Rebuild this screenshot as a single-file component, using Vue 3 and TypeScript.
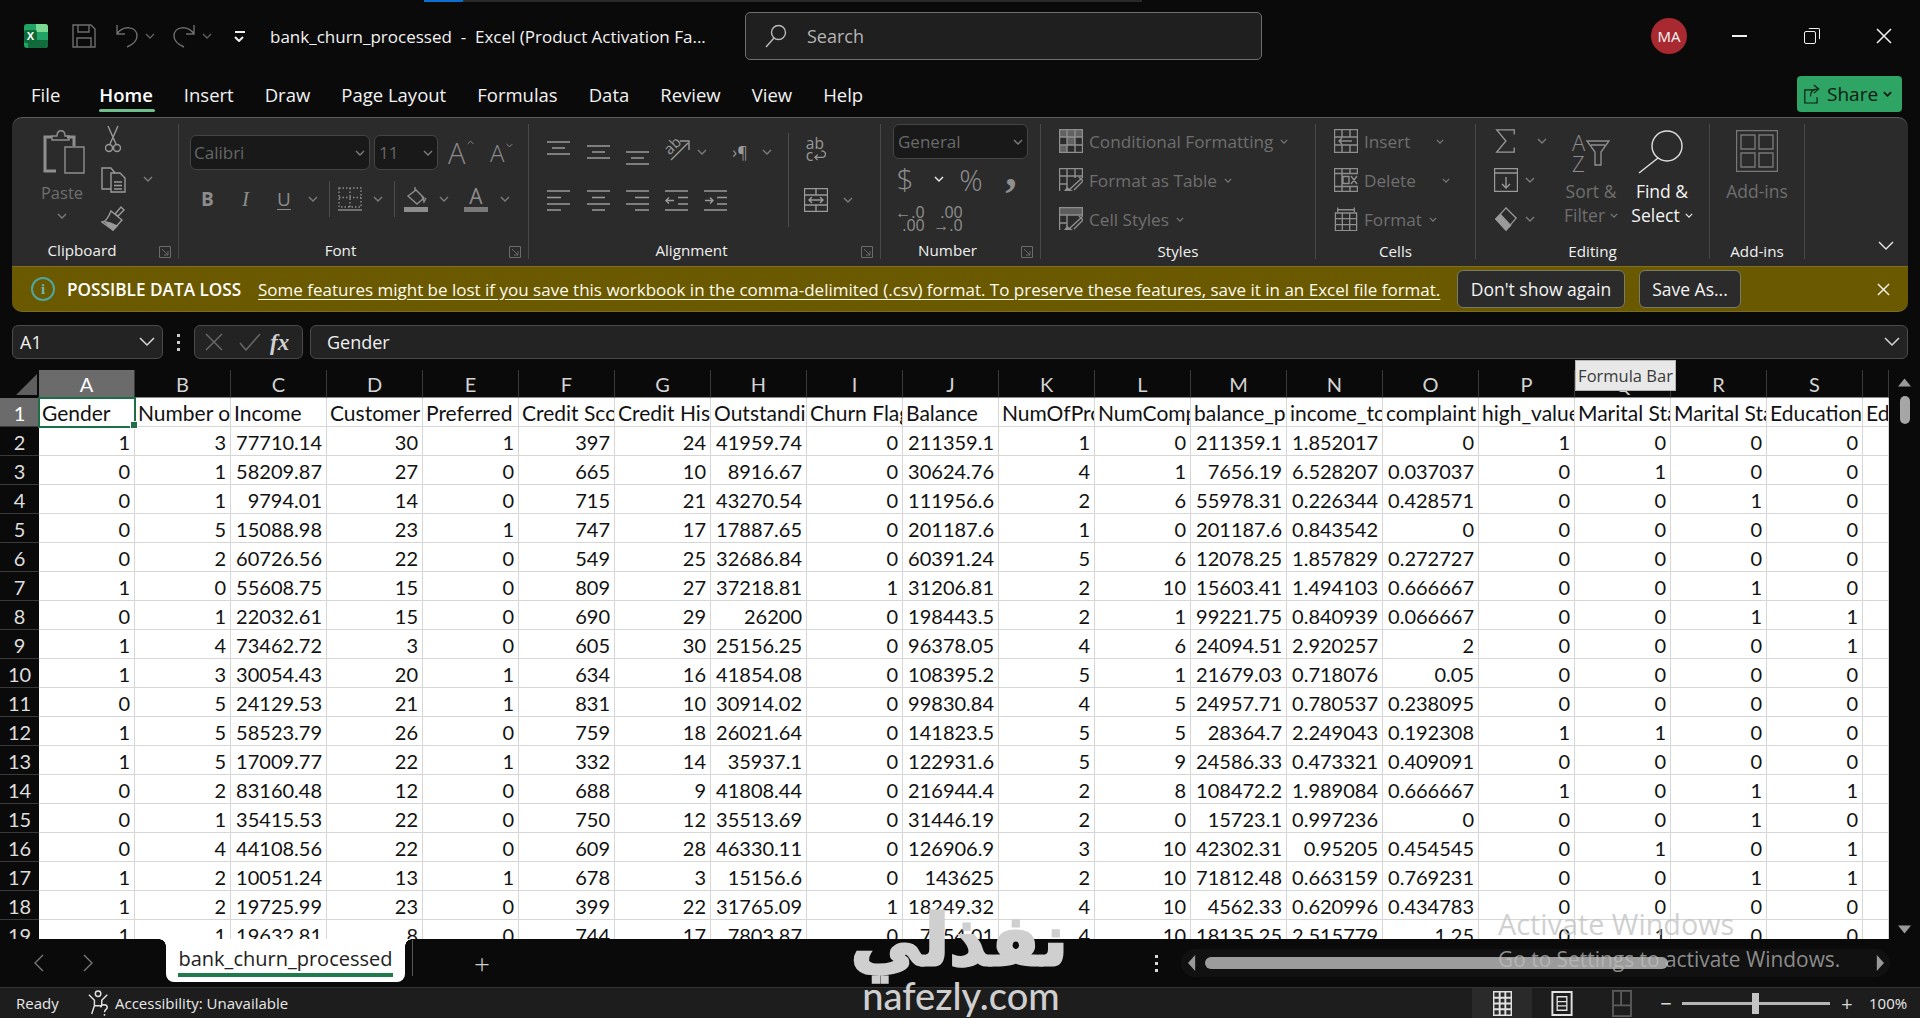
<script setup lang="ts">
const columns = "ABCDEFGHIJKLMNOPQRS".split("");

const headers = [
  "Gender", "Number of", "Income", "Customer", "Preferred", "Credit Score", "Credit History",
  "Outstanding", "Churn Flag", "Balance", "NumOfProducts", "NumComplaints", "balance_per",
  "income_to", "complaint", "high_value", "Marital Status", "Marital Status", "Education", "Education",
];

const rows: string[] = [
  "1,3,77710.14,30,1,397,24,41959.74,0,211359.1,1,0,211359.1,1.852017,0,1,0,0,0",
  "0,1,58209.87,27,0,665,10,8916.67,0,30624.76,4,1,7656.19,6.528207,0.037037,0,1,0,0",
  "0,1,9794.01,14,0,715,21,43270.54,0,111956.6,2,6,55978.31,0.226344,0.428571,0,0,1,0",
  "0,5,15088.98,23,1,747,17,17887.65,0,201187.6,1,0,201187.6,0.843542,0,0,0,0,0",
  "0,2,60726.56,22,0,549,25,32686.84,0,60391.24,5,6,12078.25,1.857829,0.272727,0,0,0,0",
  "1,0,55608.75,15,0,809,27,37218.81,1,31206.81,2,10,15603.41,1.494103,0.666667,0,0,1,0",
  "0,1,22032.61,15,0,690,29,26200,0,198443.5,2,1,99221.75,0.840939,0.066667,0,0,1,1",
  "1,4,73462.72,3,0,605,30,25156.25,0,96378.05,4,6,24094.51,2.920257,2,0,0,0,1",
  "1,3,30054.43,20,1,634,16,41854.08,0,108395.2,5,1,21679.03,0.718076,0.05,0,0,0,0",
  "0,5,24129.53,21,1,831,10,30914.02,0,99830.84,4,5,24957.71,0.780537,0.238095,0,0,0,0",
  "1,5,58523.79,26,0,759,18,26021.64,0,141823.5,5,5,28364.7,2.249043,0.192308,1,1,0,0",
  "1,5,17009.77,22,1,332,14,35937.1,0,122931.6,5,9,24586.33,0.473321,0.409091,0,0,0,0",
  "0,2,83160.48,12,0,688,9,41808.44,0,216944.4,2,8,108472.2,1.989084,0.666667,1,0,1,1",
  "0,1,35415.53,22,0,750,12,35513.69,0,31446.19,2,0,15723.1,0.997236,0,0,0,1,0",
  "0,4,44108.56,22,0,609,28,46330.11,0,126906.9,3,10,42302.31,0.95205,0.454545,0,1,0,1",
  "1,2,10051.24,13,1,678,3,15156.6,0,143625,2,10,71812.48,0.663159,0.769231,0,0,1,1",
  "1,2,19725.99,23,0,399,22,31765.09,1,18249.32,4,10,4562.33,0.620996,0.434783,0,0,0,0",
  "1,1,19632.81,8,0,744,17,7803.87,0,7254.01,4,10,18135.25,2.515779,1.25,0,1,0,0",
];

const table = rows.map((r) => r.split(","));
const tabs = ["Insert", "Draw", "Page Layout", "Formulas", "Data", "Review", "View", "Help"];
</script>

<template>
  <div class="app">
    <svg class="defs" aria-hidden="true">
      <symbol id="chev" viewBox="0 0 10 6"><path d="M1 1l4 4 4-4" /></symbol>
      <symbol id="launch" viewBox="0 0 12 12"><path d="M.5.5h11v11H.5zM3 3l6 6M9 5v4H5" /></symbol>
      <symbol id="save" viewBox="0 0 24 24"><path d="M1 1h18l4 4v18H1zM6 1v7h11V1M5 23v-9h14v9" /></symbol>
      <symbol id="undo" viewBox="0 0 24 24"><path d="M2 1v9h8M2 10C8 1 22 2 22 12c0 5-3 8-10 11" /></symbol>
      <symbol id="redo" viewBox="0 0 24 24"><path d="M22 1v9h-8M22 10C16 1 2 2 2 12c0 5 3 8 10 11" /></symbol>
      <symbol id="search" viewBox="0 0 22 24"><circle cx="13.5" cy="8.500" r="7" /><path d="M9 14L1 23" /></symbol>
      <symbol id="paste" viewBox="0 0 42 46">
        <path d="M9 8H2v34h11" stroke-width="3" />
        <path d="M24 8h7v9" stroke-width="3" />
        <path d="M9 11V7h5c0-7 8-7 8 0h4v4z" />
        <path d="M22 18h19v26H22z" />
      </symbol>
      <symbol id="cut" viewBox="0 0 16 28"><path d="M3 1l8 18M13 1L5 19" /><circle cx="4" cy="23" r="3.500" /><circle cx="12" cy="23" r="3.500" /></symbol>
      <symbol id="copy" viewBox="0 0 25 26"><path d="M10 22H1V1h9l4 5" /><path d="M10 6h9l5 5v14H10zM13 15h8M13 18.500h8M13 22h8" /></symbol>
      <symbol id="brush" viewBox="0 0 24 26"><path d="M14 9l6-7 3 3-6 6zM10 6l11 9-9 10-11-8c4 0 7-6 9-11z" /><path d="M4 17l8 8 4-4-7-3z" fill="currentColor" /></symbol>
      <symbol id="border" viewBox="0 0 24 24">
        <path d="M1 1h22v19H1zM12 1v19M1 10.500h22" stroke-dasharray="1.500 2" />
        <path d="M0 23h24" />
      </symbol>
      <symbol id="bucket" viewBox="0 0 24 26">
        <path d="M4 10l8-6 8 8-7 6zM11 4V1" />
        <path d="M18 10l2 6 2-4" />
        <path d="M0 21h24v5H0z" fill="currentColor" stroke="none" />
      </symbol>
      <symbol id="al1" viewBox="0 0 23 14"><path d="M0 1h23M5 7h13M0 13h23" /></symbol>
      <symbol id="al-l" viewBox="0 0 23 21"><path d="M0 1h23M0 7.500h14M0 14h23M0 20h14" /></symbol>
      <symbol id="al-c" viewBox="0 0 23 21"><path d="M0 1h23M5 7.500h13M0 14h23M5 20h13" /></symbol>
      <symbol id="al-r" viewBox="0 0 23 21"><path d="M0 1h23M9 7.500h14M0 14h23M9 20h14" /></symbol>
      <symbol id="ind-l" viewBox="0 0 23 21"><path d="M0 1h23M0 20h23M13 7.500h10M13 14h10M9 10.500H1M4 7.500l-3 3 3 3" /></symbol>
      <symbol id="ind-r" viewBox="0 0 23 21"><path d="M0 1h23M0 20h23M13 7.500h10M13 14h10M1 10.500h8M6 7.500l3 3-3 3" /></symbol>
      <symbol id="arrow-ne" viewBox="0 0 26 22"><path d="M7 21L24 4M16 2h9v9" /></symbol>
      <symbol id="wrap-arrow" viewBox="0 0 14 12"><path d="M9 1c6 0 6 7 0 7H2M5 5L2 8l3 3" /></symbol>
      <symbol id="merge" viewBox="0 0 24 24"><path d="M.5.5h23v23H.5zM.5 7h23M.5 17h23M12 .5V7M12 17v6.500M5 12h14M8 9l-3 3 3 3M16 9l3 3-3 3" /></symbol>
      <symbol id="cond" viewBox="0 0 24 24">
        <path d="M.5.5h23v23H.5zM.5 8h23M.5 16h23M8 .5v23M16 .5v23" />
        <path d="M.5.5h23V8H.5zM8 8h8v8H8zM.5 16H8v7.500H.5z" fill="currentColor" fill-opacity=".55" stroke="none" />
      </symbol>
      <symbol id="table" viewBox="0 0 24 24">
        <path d="M.5 23V.5h23V10M.5 8h23M.5 16h8M8 .5V23M16 .5V10" />
        <path d="M23 10L11 21M20 9l4 4-9 9" />
        <path d="M8 19l6 4H5z" fill="currentColor" stroke="none" />
      </symbol>
      <symbol id="cellst" viewBox="0 0 24 24">
        <path d="M.5 23V.5h23V10M.5 8h23M.5 16h8M8 8v15" />
        <path d="M.5.5h23V8H.5z" fill="currentColor" fill-opacity=".5" stroke="none" />
        <path d="M23 10L11 21M20 9l4 4-9 9" />
        <path d="M8 19l6 4H5z" fill="currentColor" stroke="none" />
      </symbol>
      <symbol id="c-ins" viewBox="0 0 24 24"><path d="M.5.5h23v23H.5zM.5 8h23M.5 16h23M8 .5V8M16 .5V8M8 16v7.500M16 16v7.500M18 12H5M8 9l-3 3 3 3" /></symbol>
      <symbol id="c-del" viewBox="0 0 24 24"><path d="M.5.5h23v5H.5zM.5 18.500h23v5H.5zM.5 5.500v13M8 .5v23M16 .5v5M16 18.500v5M9 8.500h6v7H9zM17 8l6 8M23 8l-6 8" /></symbol>
      <symbol id="c-fmt" viewBox="0 0 24 26"><path d="M.5 6.500h23v19H.5zM.5 12.500h23M.5 19h23M8 6.500v19M16 6.500v19M3 3h18M3 .5v5M21 .5v5" /></symbol>
      <symbol id="sigma" viewBox="0 0 22 26"><path d="M21 6V1H2l10 12L2 25h19v-5" /></symbol>
      <symbol id="fill" viewBox="0 0 24 24"><path d="M.5.5h23v23H.5zM.5 5h23M12 9v11M8 16l4 4 4-4" /></symbol>
      <symbol id="eraser" viewBox="0 0 24 26"><path d="M12 1l11 11-11 13L1 13z" /><path d="M1 13l5-5 11 12-5 5z" fill="currentColor" /></symbol>
      <symbol id="funnel" viewBox="0 0 24 26"><path d="M1 1h22l-8 11v13H9V12zM5 5h14" /></symbol>
      <symbol id="glass" viewBox="0 0 45 44"><circle cx="29" cy="16" r="15" /><path d="M20 28L1 43" /></symbol>
      <symbol id="addins" viewBox="0 0 42 42"><path d="M.5.5h41v41H.5zM5 5h14v14H5zM23 5h14v14H23zM5 23h14v14H5zM23 23h14v14H23z" /></symbol>
      <symbol id="tri-l" viewBox="0 0 10 20"><path d="M9 0v20L0 10z" fill="currentColor" stroke="none" /></symbol>
      <symbol id="tri-r" viewBox="0 0 10 20"><path d="M1 0v20l9-10z" fill="currentColor" stroke="none" /></symbol>
      <symbol id="share" viewBox="0 0 22 24"><path d="M13 7H1v16h15v-7M8 15c0-6 3-9 8-9M12 1l6 5-6 5" /></symbol>
      <symbol id="person" viewBox="0 0 24 28"><circle cx="11" cy="4" r="3" /><path d="M1 5l6 6v6l-3 9M21 5l-6 6v6M7 17h8M14 19c0-4 7-4 7 0 0 2-3 2-3 5M18 26v2" /></symbol>
      <symbol id="v-normal" viewBox="0 0 20 26"><path d="M.5.5h19v25H.5zM.5 7h19M.5 13h19M.5 19h19M7 .5v25M13 .5v25" stroke-width="2" /></symbol>
      <symbol id="v-page" viewBox="0 0 22 26"><path d="M1 1h20v24H1z" stroke-width="2" /><path d="M6 6h10v14H6zM6 11h10M6 15.500h10" /></symbol>
      <symbol id="v-break" viewBox="0 0 22 30"><path d="M1 1h20v28H1zM1 17h20M10 1v16" stroke-width="2" /></symbol>
    </svg>

    <div class="loadbar"><i class="load-blue" /><i class="load-gray" /></div>

    <header class="titlebar">
      <div class="logo">
        <i class="logo-a" /><i class="logo-b" /><i class="logo-c" />
        <span class="logo-x">X</span>
      </div>
      <svg class="ic save"><use href="#save" /></svg>
      <svg class="ic undo"><use href="#undo" /></svg>
      <svg class="chev tb-chev"><use href="#chev" /></svg>
      <svg class="ic redo"><use href="#redo" /></svg>
      <svg class="chev tb-chev"><use href="#chev" /></svg>
      <span class="qat"><i class="qat-line" /><svg class="chev qat-chev"><use href="#chev" /></svg></span>
      <div class="doc-title">bank_churn_processed&nbsp; -&nbsp; Excel (Product Activation Fa...</div>
      <div class="searchbox">
        <svg class="ic search-ic"><use href="#search" /></svg>
        <span>Search</span>
      </div>
      <div class="avatar">MA</div>
      <i class="win-min" />
      <div class="win-restore"><i /><i /></div>
      <svg class="win-close" viewBox="0 0 16 16"><path d="M1 1l14 14M15 1L1 15" /></svg>
    </header>

    <nav class="tabbar">
      <span class="tab file">File</span>
      <span class="tab active">Home</span>
      <span v-for="t in tabs" :key="t" class="tab">{{ t }}</span>
      <button class="share" type="button">
        <svg class="ic share-ic"><use href="#share" /></svg>
        <span>Share</span>
        <svg class="chev share-chev"><use href="#chev" /></svg>
      </button>
    </nav>

    <section class="ribbon">
      <!-- Clipboard -->
      <div class="group g-clip">
        <div class="body">
          <div class="paste-col">
            <svg class="ic paste-ic"><use href="#paste" /></svg>
            <span class="off paste-txt">Paste</span>
            <svg class="chev"><use href="#chev" /></svg>
          </div>
          <div class="clip-small">
            <svg class="ic cut-ic"><use href="#cut" /></svg>
            <svg class="ic copy-ic"><use href="#copy" /></svg>
            <svg class="ic brush-ic"><use href="#brush" /></svg>
          </div>
          <svg class="chev copy-chev"><use href="#chev" /></svg>
        </div>
        <div class="glabel"><span>Clipboard</span><svg class="launch"><use href="#launch" /></svg></div>
      </div>

      <!-- Font -->
      <div class="group g-font">
        <div class="body col">
          <div class="font-row1">
            <div class="combo font-name"><span>Calibri</span><svg class="chev"><use href="#chev" /></svg></div>
            <div class="combo font-size"><span>11</span><svg class="chev"><use href="#chev" /></svg></div>
            <span class="grow-a big">A<svg class="chev up-chev"><use href="#chev" /></svg></span>
            <span class="grow-a small">A<svg class="chev dn-chev"><use href="#chev" /></svg></span>
          </div>
          <div class="font-row2">
            <span class="fmt b">B</span>
            <span class="fmt i">I</span>
            <span class="fmt u">U</span>
            <svg class="chev"><use href="#chev" /></svg>
            <i class="vsep" />
            <svg class="ic border-ic"><use href="#border" /></svg>
            <svg class="chev"><use href="#chev" /></svg>
            <i class="vsep" />
            <svg class="ic bucket-ic"><use href="#bucket" /></svg>
            <svg class="chev"><use href="#chev" /></svg>
            <span class="font-color">A<i /></span>
            <svg class="chev"><use href="#chev" /></svg>
          </div>
        </div>
        <div class="glabel"><span>Font</span><svg class="launch"><use href="#launch" /></svg></div>
      </div>

      <!-- Alignment -->
      <div class="group g-align">
        <div class="body">
          <div class="align-left">
            <div class="align-row1">
              <svg class="ic al al-top"><use href="#al1" /></svg>
              <svg class="ic al al-mid"><use href="#al1" /></svg>
              <svg class="ic al al-bot"><use href="#al1" /></svg>
              <span class="orient"><span class="orient-txt">ab</span><svg class="ic orient-ic"><use href="#arrow-ne" /></svg></span>
              <svg class="chev"><use href="#chev" /></svg>
              <i />
              <span class="rtl">›¶</span>
              <svg class="chev"><use href="#chev" /></svg>
            </div>
            <div class="align-row2">
              <svg class="ic al2"><use href="#al-l" /></svg>
              <svg class="ic al2"><use href="#al-c" /></svg>
              <svg class="ic al2"><use href="#al-r" /></svg>
              <svg class="ic al2"><use href="#ind-l" /></svg>
              <svg class="ic al2"><use href="#ind-r" /></svg>
            </div>
          </div>
          <i class="align-sep" />
          <div class="align-right">
            <span class="wrap"><span>ab</span><span class="wrap-l2">c<svg class="ic wrap-ic"><use href="#wrap-arrow" /></svg></span></span>
            <i />
            <svg class="ic merge-ic"><use href="#merge" /></svg>
            <svg class="chev"><use href="#chev" /></svg>
          </div>
        </div>
        <div class="glabel"><span>Alignment</span><svg class="launch"><use href="#launch" /></svg></div>
      </div>

      <!-- Number -->
      <div class="group g-num">
        <div class="body col">
          <div class="combo num-combo"><span>General</span><svg class="chev"><use href="#chev" /></svg></div>
          <div class="num-row2">
            <span class="glyph dollar">$</span>
            <svg class="chev bright"><use href="#chev" /></svg>
            <span class="glyph pct">%</span>
            <span class="glyph comma">,</span>
          </div>
          <div class="num-row3">
            <span class="dec"><span>←.0</span><span>.00</span></span>
            <span class="dec"><span>.00</span><span>→.0</span></span>
          </div>
        </div>
        <div class="glabel"><span>Number</span><svg class="launch"><use href="#launch" /></svg></div>
      </div>

      <!-- Styles -->
      <div class="group g-styles">
        <div class="body col list">
          <div class="item"><svg class="ic item-ic"><use href="#cond" /></svg><span>Conditional Formatting</span><svg class="chev"><use href="#chev" /></svg></div>
          <div class="item"><svg class="ic item-ic"><use href="#table" /></svg><span>Format as Table</span><svg class="chev"><use href="#chev" /></svg></div>
          <div class="item"><svg class="ic item-ic"><use href="#cellst" /></svg><span>Cell Styles</span><svg class="chev"><use href="#chev" /></svg></div>
        </div>
        <div class="glabel plain"><span>Styles</span></div>
      </div>

      <!-- Cells -->
      <div class="group g-cells">
        <div class="body col list">
          <div class="item"><svg class="ic item-ic"><use href="#c-ins" /></svg><span>Insert</span><svg class="chev far"><use href="#chev" /></svg></div>
          <div class="item"><svg class="ic item-ic"><use href="#c-del" /></svg><span>Delete</span><svg class="chev far"><use href="#chev" /></svg></div>
          <div class="item"><svg class="ic item-ic"><use href="#c-fmt" /></svg><span>Format</span><svg class="chev"><use href="#chev" /></svg></div>
        </div>
        <div class="glabel plain"><span>Cells</span></div>
      </div>

      <!-- Editing -->
      <div class="group g-edit">
        <div class="body">
          <div class="edit-small">
            <div class="edit-row"><svg class="ic sigma"><use href="#sigma" /></svg><svg class="chev sigma-chev"><use href="#chev" /></svg></div>
            <div class="edit-row"><svg class="ic fill-ic"><use href="#fill" /></svg><svg class="chev"><use href="#chev" /></svg></div>
            <div class="edit-row"><svg class="ic eraser"><use href="#eraser" /></svg><svg class="chev"><use href="#chev" /></svg></div>
          </div>
          <div class="big-btn sort">
            <div class="sort-ic">
              <span class="az">A<br />Z</span>
              <svg class="ic funnel"><use href="#funnel" /></svg>
            </div>
            <span class="off">Sort &amp;</span>
            <span class="off">Filter <svg class="chev"><use href="#chev" /></svg></span>
          </div>
          <div class="big-btn find">
            <svg class="ic glass"><use href="#glass" /></svg>
            <span>Find &amp;</span>
            <span>Select <svg class="chev bright"><use href="#chev" /></svg></span>
          </div>
        </div>
        <div class="glabel plain"><span>Editing</span></div>
      </div>

      <!-- Add-ins -->
      <div class="group g-add">
        <div class="body">
          <div class="big-btn addin">
            <svg class="ic addins"><use href="#addins" /></svg>
            <span class="off">Add-ins</span>
          </div>
        </div>
        <div class="glabel plain"><span>Add-ins</span></div>
      </div>

      <div class="ribbon-end">
        <svg class="collapse" viewBox="0 0 16 10"><path d="M1 1l7 7 7-7" /></svg>
      </div>
    </section>

    <section class="warnbar">
      <span class="info">i</span>
      <b class="warn-title">POSSIBLE DATA LOSS</b>
      <a class="warn-link">Some features might be lost if you save this workbook in the comma-delimited (.csv) format. To preserve these features, save it in an Excel file format.</a>
      <button class="warn-btn dont" type="button">Don't show again</button>
      <button class="warn-btn saveas" type="button">Save As...</button>
      <svg class="warn-close" viewBox="0 0 14 14"><path d="M1 1l12 12M13 1L1 13" /></svg>
    </section>

    <section class="formula">
      <div class="namebox"><span>A1</span><svg class="fx-chev" viewBox="0 0 16 10"><path d="M1 1l7 7 7-7" /></svg></div>
      <div class="fx-dots"><i /><i /><i /></div>
      <div class="fx-btns">
        <svg class="fx-x" viewBox="0 0 18 18"><path d="M1 1l16 16M17 1L1 17" /></svg>
        <svg class="fx-ok" viewBox="0 0 22 18"><path d="M1 10l6 7L21 1" /></svg>
        <span class="fx-label">fx</span>
      </div>
      <div class="fx-input"><span>Gender</span><svg class="fx-chev" viewBox="0 0 16 10"><path d="M1 1l7 7 7-7" /></svg></div>
    </section>

    <section class="sheet">
      <div class="grid">
        <div class="corner"><i /></div>
        <div v-for="(c, i) in columns" :key="c" class="colhead" :class="{ sel: i === 0 }">{{ c }}</div>
        <div class="colhead" />

        <div class="rowhead sel">1</div>
        <div v-for="(h, i) in headers" :key="'h' + i" class="cell text" :class="{ current: i === 0 }">
          {{ h }}
          <i v-if="i === 0" class="handle" />
        </div>

        <template v-for="(row, r) in table" :key="r">
          <div class="rowhead">{{ r + 2 }}</div>
          <div v-for="(v, i) in row" :key="i" class="cell">{{ v }}</div>
          <div class="cell" />
        </template>
      </div>
      <div class="vscroll">
        <svg class="tri" viewBox="0 0 20 12"><path d="M10 0l10 12H0z" /></svg>
        <i class="vthumb" />
        <svg class="tri down" viewBox="0 0 20 12"><path d="M0 0h20L10 12z" /></svg>
      </div>
    </section>

    <section class="sheetbar">
      <svg class="nav-ic" viewBox="0 0 10 18"><path d="M9 1L1 9l8 8" /></svg>
      <svg class="nav-ic next" viewBox="0 0 10 18"><path d="M1 1l8 8-8 8" /></svg>
      <div class="sheet-tab"><span>bank_churn_processed</span></div>
      <i class="tab-sep" />
      <span class="plus">+</span>
      <div class="hdots"><i /><i /><i /></div>
      <div class="hscroll">
        <svg class="htri"><use href="#tri-l" /></svg>
        <i class="hthumb" />
        <svg class="htri right"><use href="#tri-r" /></svg>
      </div>
    </section>

    <footer class="status">
      <span class="ready">Ready</span>
      <svg class="ic person"><use href="#person" /></svg>
      <span class="access">Accessibility: Unavailable</span>
      <div class="view-btn on"><svg class="ic v-normal"><use href="#v-normal" /></svg></div>
      <div class="view-btn"><svg class="ic v-page"><use href="#v-page" /></svg></div>
      <div class="view-btn dim"><svg class="ic v-break"><use href="#v-break" /></svg></div>
      <span class="zoom-sign minus">−</span>
      <div class="slider"><i /></div>
      <span class="zoom-sign">+</span>
      <span class="zoom-val">100%</span>
    </footer>

    <div class="tooltip">Formula Bar</div>
    <div class="activate">
      <div class="act-1">Activate Windows</div>
      <div class="act-2">Go to Settings to activate Windows.</div>
    </div>
    <div class="mark">
      <div class="mark-ar" lang="ar" dir="rtl">نفذلي</div>
      <div class="mark-en">nafezly.com</div>
    </div>
  </div>
</template>

<style>
html,
body {
  margin: 0;
  background: #0a0a0a;
}
</style>

<style scoped>
.app {
  position: relative;
  width: 1920px;
  height: 1018px;
  overflow: hidden;
  display: flex;
  flex-direction: column;
  background: #0a0a0a;
  color: #f2f2f2;
  font-family: "Open Sans", "Noto Sans", sans-serif;
  font-size: 16px;
}

i {
  display: block;
  font-style: normal;
}

.defs {
  position: absolute;
  width: 0;
  height: 0;
}

.ic,
.chev,
.launch {
  fill: none;
  stroke: currentColor;
  stroke-width: 1.4;
  display: block;
  flex: none;
}

.chev {
  width: 10px;
  height: 6px;
  color: #7c7c7c;
}

.chev.bright {
  color: #f0f0f0;
}

.launch {
  width: 12px;
  height: 12px;
  color: #6a6a6a;
  stroke-width: 1;
}

.off {
  color: #6f6f6f;
}

/* top strip */
.loadbar {
  position: absolute;
  left: 424px;
  top: 0;
  display: flex;
}

.load-blue {
  width: 39px;
  height: 2px;
  background: #0a6fd0;
}

.load-gray {
  width: 679px;
  height: 2px;
  background: #2a2a2a;
}

/* title bar */
.titlebar {
  height: 72px;
  flex: none;
  display: flex;
  align-items: center;
  padding-left: 24px;
}

.logo {
  position: relative;
  width: 24px;
  height: 24px;
  flex: none;
  border-radius: 3px;
  overflow: hidden;
  background: #21a366;
}

.logo-a {
  position: absolute;
  left: 12px;
  top: 0;
  width: 12px;
  height: 8px;
  background: #7cd992;
}

.logo-b {
  position: absolute;
  left: 4px;
  top: 16px;
  width: 20px;
  height: 8px;
  background: #116b3c;
}

.logo-c {
  position: absolute;
  left: 0;
  top: 6px;
  width: 13px;
  height: 13px;
  background: #0f6a3a;
  border-radius: 2px;
}

.logo-x {
  position: absolute;
  left: 0;
  top: 6px;
  width: 13px;
  height: 13px;
  font: 700 11px/13px "Liberation Sans", sans-serif;
  text-align: center;
  color: #fff;
}

.save {
  width: 24px;
  height: 24px;
  margin-left: 24px;
  color: #6e6e6e;
}

.undo,
.redo {
  width: 24px;
  height: 24px;
  color: #6e6e6e;
}

.undo {
  margin-left: 19px;
}

.redo {
  margin-left: 17px;
}

.tb-chev {
  margin-left: 6px;
  color: #5f5f5f;
}

.qat {
  margin-left: 22px;
  width: 12px;
  flex: none;
}

.qat-line {
  width: 10px;
  height: 2px;
  background: #eee;
  margin: 0 0 3px 1px;
}

.qat-chev {
  color: #eee;
  stroke-width: 2;
}

.doc-title {
  margin-left: 24px;
  width: 475px;
  flex: none;
  white-space: nowrap;
  font-size: 17px;
  color: #f2f2f2;
}

.searchbox {
  width: 517px;
  height: 48px;
  box-sizing: border-box;
  flex: none;
  display: flex;
  align-items: center;
  border: 1px solid #6e6e6e;
  border-radius: 5px;
  background: #1f1f1f;
  color: #b5b5b5;
  font-size: 18px;
  padding-left: 19px;
  gap: 20px;
}

.search-ic {
  width: 22px;
  height: 24px;
  color: #bcbcbc;
}

.avatar {
  width: 36px;
  height: 36px;
  flex: none;
  margin-left: 389px;
  border-radius: 50%;
  background: #a82a30;
  color: #f6f6f6;
  font-size: 15px;
  line-height: 36px;
  text-align: center;
}

.win-min {
  width: 15px;
  height: 2px;
  margin-left: 45px;
  background: #f0f0f0;
  flex: none;
}

.win-restore {
  position: relative;
  width: 16px;
  height: 16px;
  margin-left: 57px;
  flex: none;
}

.win-restore i {
  position: absolute;
  box-sizing: border-box;
  border: 1.500px solid #f0f0f0;
  border-radius: 2px;
}

.win-restore i:first-child {
  left: 4px;
  top: 0;
  width: 12px;
  height: 12px;
  border-bottom-color: transparent;
  border-left-color: transparent;
}

.win-restore i:last-child {
  left: 0;
  top: 3px;
  width: 12px;
  height: 13px;
}

.win-close {
  width: 16px;
  height: 16px;
  margin-left: 56px;
  flex: none;
  fill: none;
  stroke: #f0f0f0;
  stroke-width: 1.500;
}

/* tabs */
.tabbar {
  height: 45px;
  flex: none;
  display: flex;
  align-items: flex-start;
  padding-left: 31px;
  gap: 31px;
}

.tab {
  position: relative;
  font-size: 18.500px;
  line-height: 46px;
  height: 40px;
  color: #f2f2f2;
  white-space: nowrap;
}

.tab.file {
  margin-right: 8px;
}

.tab.active {
  font-weight: 600;
  color: #fff;
}

.tab.active::after {
  content: "";
  position: absolute;
  left: 0;
  right: -2px;
  top: 37px;
  height: 3px;
  border-radius: 2px;
  background: #6fbe8e;
}

.share {
  margin-left: auto;
  margin-right: 18px;
  margin-top: 4px;
  width: 105px;
  height: 36px;
  display: flex;
  align-items: center;
  padding: 0 0 0 7px;
  border: none;
  border-radius: 4px;
  background: #2ea565;
  color: #0c1a12;
  font: 19px "Open Sans", sans-serif;
  gap: 5px;
  white-space: nowrap;
}

.share-ic {
  width: 18px;
  height: 20px;
  color: #0c1a12;
}

.share-chev {
  color: #0c1a12;
  stroke-width: 2;
  width: 9px;
}

/* ribbon */
.ribbon {
  height: 149px;
  flex: none;
  box-sizing: border-box;
  margin: 0 12px;
  display: flex;
  background: #2b2b2b;
  border-top: 1px solid #5c5c5c;
  border-radius: 10px 10px 0 0;
  padding-top: 6px;
}

.group {
  height: 135px;
  box-sizing: border-box;
  flex: none;
  display: flex;
  flex-direction: column;
  border-right: 1px solid #484848;
}

.g-clip { width: 167px; }
.g-font { width: 350px; }
.g-align { width: 352px; }
.g-num { width: 160px; }
.g-styles { width: 275px; }
.g-cells { width: 160px; }
.g-edit { width: 234px; }
.g-add { width: 95px; }

.body {
  flex: 1;
  min-height: 0;
  display: flex;
}

.col {
  flex-direction: column;
}

.glabel {
  height: 26px;
  flex: none;
  box-sizing: border-box;
  padding-top: 8px;
  display: flex;
  align-items: center;
  font-size: 15.200px;
  color: #f0f0f0;
}

.glabel span {
  flex: 1;
  text-align: center;
}

.glabel .launch {
  margin-right: 7px;
  margin-left: 7px;
  margin-top: 4px;
}

.glabel.plain {
  padding-top: 10px;
}

/* clipboard */
.paste-col {
  width: 64px;
  margin-left: 18px;
  display: flex;
  flex-direction: column;
  align-items: center;
}

.paste-ic {
  width: 42px;
  height: 46px;
  margin-top: 5px;
  margin-left: 4px;
  color: #8f8f8f;
}

.paste-txt {
  margin-top: 7px;
  font-size: 16.500px;
  line-height: 22px;
}

.paste-col .chev {
  margin-top: 9px;
}

.clip-small {
  width: 26px;
  margin-left: 6px;
  display: flex;
  flex-direction: column;
  align-items: center;
  color: #9a9a9a;
}

.cut-ic {
  width: 16px;
  height: 28px;
  margin-top: 1px;
}

.copy-ic {
  width: 25px;
  height: 26px;
  margin-top: 14px;
}

.brush-ic {
  width: 24px;
  height: 26px;
  margin-top: 12px;
}

.copy-chev {
  margin: 52px 0 0 17px;
}

/* font */
.g-font .body {
  padding-left: 11px;
}

.font-row1 {
  display: flex;
  align-items: center;
  margin-top: 11px;
  height: 35px;
}

.combo {
  box-sizing: border-box;
  height: 35px;
  display: flex;
  align-items: center;
  justify-content: space-between;
  background: #191919;
  border: 1px solid #444;
  border-radius: 6px;
  padding: 0 4px 0 3px;
  color: #666;
  font-size: 17px;
  flex: none;
}

.font-name {
  width: 180px;
}

.font-size {
  width: 64px;
  margin-left: 4px;
  padding-left: 4px;
}

.grow-a {
  position: relative;
  color: #8a8a8a;
  line-height: 1;
  font-weight: 300;
  flex: none;
}

.grow-a.big {
  font-size: 29px;
  margin-left: 10px;
  width: 42px;
}

.grow-a.small {
  font-size: 24px;
  width: 24px;
}

.grow-a .chev {
  position: absolute;
  width: 7px;
  height: 5px;
  color: #8a8a8a;
}

.up-chev {
  left: 19px;
  top: 2px;
  transform: scaleY(-1);
}

.dn-chev {
  left: 16px;
  top: 2px;
}

.font-row2 {
  display: grid;
  grid-template-columns: 35px 41px 36px 22px 10px 32px 24px 8px 36px 20px 44px 14px;
  align-items: center;
  justify-items: center;
  height: 36px;
  margin-top: 11px;
  color: #8d8d8d;
}

.fmt {
  font-size: 19px;
  line-height: 1;
}

.fmt.b {
  font-weight: 700;
}

.fmt.i {
  font-style: italic;
  font-family: "Liberation Serif", serif;
  font-size: 21px;
}

.fmt.u {
  text-decoration: underline;
  text-underline-offset: 3px;
}

.vsep {
  width: 1px;
  height: 36px;
  background: #4c4c4c;
}

.border-ic {
  width: 24px;
  height: 24px;
}

.bucket-ic {
  width: 24px;
  height: 26px;
}

.font-color {
  width: 24px;
  font-size: 21px;
  line-height: 20px;
  text-align: center;
}

.font-color i {
  height: 5px;
  background: #7a7a7a;
  margin-top: 1px;
}

/* alignment */
.align-left {
  width: 250px;
  margin-left: 9px;
  margin-top: 10px;
  color: #9a9a9a;
}

.align-row1 {
  display: grid;
  grid-template-columns: 40px 40px 38px 42px 8px 14px 40px 14px;
  align-items: center;
  justify-items: center;
  height: 36px;
}

.align-row2 {
  display: grid;
  grid-template-columns: 40px 40px 38px 40px 38px;
  align-items: center;
  justify-items: center;
  height: 36px;
  margin-top: 12px;
}

.al {
  width: 23px;
  height: 14px;
}

.al-top {
  transform: translateY(-4px);
}

.al-bot {
  transform: translateY(6px);
}

.al2 {
  width: 23px;
  height: 21px;
}

.orient {
  position: relative;
  width: 26px;
  height: 22px;
  margin-top: -4px;
}

.orient-txt {
  position: absolute;
  left: -1px;
  top: -2px;
  font-size: 15px;
  line-height: 16px;
  transform: rotate(-45deg);
}

.orient-ic {
  position: absolute;
  inset: 0;
  width: 26px;
  height: 22px;
}

.rtl {
  font-size: 16px;
  line-height: 1;
}

.align-sep {
  width: 1px;
  height: 94px;
  margin-top: 9px;
  background: #4c4c4c;
  flex: none;
}

.align-right {
  display: grid;
  grid-template-columns: 54px 10px;
  grid-template-rows: 36px 36px;
  row-gap: 12px;
  margin-top: 10px;
  align-items: center;
  justify-items: center;
  color: #9a9a9a;
}

.wrap {
  display: flex;
  flex-direction: column;
  font-size: 15.500px;
  line-height: 12px;
  align-items: flex-start;
  margin-top: -6px;
}

.wrap-l2 {
  display: flex;
  align-items: center;
}

.wrap-ic {
  width: 13px;
  height: 11px;
}

.merge-ic {
  width: 24px;
  height: 24px;
}

/* number */
.g-num .body {
  padding-left: 12px;
  overflow: visible;
}

.num-combo {
  width: 135px;
  color: #6a6a6a;
  font-size: 17px;
  padding-left: 4px;
}

.num-row2 {
  display: grid;
  grid-template-columns: 24px 44px 20px 60px;
  height: 36px;
  margin-top: 3px;
  align-items: center;
  justify-items: center;
  color: #8f8f8f;
}

.glyph {
  line-height: 1;
  font-size: 25px;
}

.glyph.dollar {
  font-weight: 300;
  font-size: 30px;
}

.glyph.pct {
  font-size: 29px;
  font-weight: 300;
}

.glyph.comma {
  font-family: "Liberation Serif", serif;
  font-weight: 700;
  font-size: 46px;
  line-height: 32px;
  margin-top: -16px;
}

.num-row3 {
  display: grid;
  grid-template-columns: 38px 38px;
  height: 28px;
  margin-top: 10px;
  margin-left: -2px;
  justify-items: center;
  color: #8f8f8f;
}

.dec {
  display: flex;
  flex-direction: column;
  align-items: flex-end;
  font-size: 16px;
  line-height: 13px;
}

/* styles / cells */
.list {
  padding: 5px 0 0 18px;
  gap: 15px;
}

.item {
  display: flex;
  align-items: center;
  height: 24px;
  color: #6f6f6f;
  font-size: 17.200px;
  white-space: nowrap;
}

.item-ic {
  width: 24px;
  height: 24px;
  margin-right: 6px;
  color: #8f8f8f;
}

.item .chev {
  width: 8px;
  height: 5px;
  margin-left: 7px;
}

.item .chev.far {
  margin-left: 26px;
}

/* editing */
.edit-small {
  width: 66px;
  margin-left: 18px;
  padding-top: 5px;
  display: flex;
  flex-direction: column;
  gap: 15px;
  color: #9a9a9a;
  flex: none;
}

.edit-row {
  display: flex;
  align-items: center;
  height: 24px;
  gap: 7px;
}

.sigma {
  width: 22px;
  height: 24px;
}

.sigma-chev {
  margin-left: 14px;
}

.fill-ic,
.eraser {
  width: 24px;
  height: 24px;
}

.big-btn {
  display: flex;
  flex-direction: column;
  align-items: center;
  font-size: 17.500px;
  line-height: 24px;
  white-space: nowrap;
  flex: none;
}

.big-btn span {
  display: flex;
  align-items: center;
  gap: 5px;
}

.big-btn .chev {
  width: 8px;
  height: 5px;
}

.sort {
  width: 62px;
}

.sort-ic {
  display: flex;
  height: 44px;
  margin-top: 6px;
  margin-bottom: 5px;
  color: #8d8d8d;
  align-items: flex-end;
}

.az {
  display: block !important;
  font-size: 22px;
  line-height: 21px;
  font-weight: 300;
}

.funnel {
  width: 24px;
  height: 26px;
  margin: 0 0 8px 1px;
}

.find {
  width: 68px;
  margin-left: 6px;
  color: #f4f4f4;
}

.glass {
  width: 45px;
  height: 44px;
  margin-top: 6px;
  margin-bottom: 5px;
  margin-left: -4px;
  color: #e0e0e0;
}

.addin {
  width: 94px;
}

.addins {
  width: 42px;
  height: 42px;
  margin-top: 6px;
  margin-bottom: 7px;
  color: #777;
}

.ribbon-end {
  flex: 1;
  display: flex;
  justify-content: flex-end;
  align-items: flex-end;
  padding: 0 14px 8px 0;
  height: 135px;
  box-sizing: border-box;
}

.collapse {
  width: 16px;
  height: 10px;
  fill: none;
  stroke: #e8e8e8;
  stroke-width: 1.400;
}

/* warning bar */
.warnbar {
  height: 46px;
  flex: none;
  box-sizing: border-box;
  margin: 0 12px;
  display: flex;
  align-items: center;
  background: #6b5900;
  border-top: 1px solid #7f6f1e;
  border-bottom: 1px solid #7a6b2a;
  border-radius: 0 0 10px 10px;
  padding-left: 19px;
  color: #fff;
  white-space: nowrap;
}

.info {
  width: 24px;
  height: 24px;
  box-sizing: border-box;
  flex: none;
  border: 2px solid #4fa6a0;
  border-radius: 50%;
  color: #6fb7ae;
  font: 700 15px/20px "Liberation Serif", serif;
  text-align: center;
}

.warn-title {
  margin-left: 12px;
  width: 191px;
  flex: none;
  font-size: 17.200px;
  font-weight: 600;
}

.warn-link {
  width: 1199px;
  flex: none;
  text-decoration: underline;
  text-underline-offset: 3px;
  font-size: 17px;
  color: #fdfdf0;
}

.warn-btn {
  height: 38px;
  box-sizing: border-box;
  flex: none;
  background: #2b2b2b;
  color: #f4f4f4;
  border: 1px solid #7b7b6a;
  border-radius: 6px;
  font: 17.500px "Open Sans", sans-serif;
  padding: 0;
  white-space: nowrap;
}

.dont {
  width: 168px;
}

.saveas {
  width: 102px;
  margin-left: 14px;
}

.warn-close {
  width: 13px;
  height: 13px;
  margin-left: 136px;
  fill: none;
  stroke: #f4f4f4;
  stroke-width: 1.500;
  flex: none;
}

/* formula bar */
.formula {
  height: 34px;
  flex: none;
  margin: 13px 12px 0;
  display: flex;
  align-items: stretch;
}

.namebox,
.fx-btns,
.fx-input {
  box-sizing: border-box;
  display: flex;
  align-items: center;
  background: #232323;
  border: 1px solid #4a4a4a;
  border-radius: 6px;
  font-size: 18px;
  color: #f0f0f0;
}

.namebox {
  width: 151px;
  padding: 0 7px;
  justify-content: space-between;
}

.fx-chev {
  width: 16px;
  height: 10px;
  fill: none;
  stroke: #d8d8d8;
  stroke-width: 1.500;
}

.fx-dots {
  width: 31px;
  display: flex;
  flex-direction: column;
  align-items: center;
  justify-content: center;
  gap: 4px;
}

.fx-dots i {
  width: 3px;
  height: 3px;
  background: #ccc;
}

.fx-btns {
  width: 109px;
  padding-left: 10px;
}

.fx-x {
  width: 18px;
  height: 18px;
  fill: none;
  stroke: #6b6b6b;
  stroke-width: 1.400;
}

.fx-ok {
  width: 22px;
  height: 18px;
  margin-left: 16px;
  fill: none;
  stroke: #6b6b6b;
  stroke-width: 1.400;
}

.fx-label {
  margin-left: 9px;
  font: italic 700 23px/1 "Liberation Serif", serif;
  color: #d0d0d0;
}

.fx-input {
  flex: 1;
  margin-left: 7px;
  padding: 0 7px 0 16px;
  justify-content: space-between;
}

/* sheet */
.sheet {
  height: 569px;
  flex: none;
  margin-top: 11px;
  display: flex;
  overflow: hidden;
}

.grid {
  width: 1889px;
  flex: none;
  display: grid;
  grid-template-columns: 39px repeat(19, 96px) 26px;
  grid-auto-rows: 29px;
  grid-template-rows: 28px;
  font-family: Lato, "Liberation Sans", sans-serif;
  font-size: 20px;
  align-content: start;
}

.corner {
  display: flex;
  align-items: flex-end;
  justify-content: flex-end;
  padding: 0 2px 3px 0;
  box-sizing: border-box;
}

.corner i {
  width: 0;
  height: 0;
  border-style: solid;
  border-width: 0 0 21px 21px;
  border-color: transparent transparent #5f5f5f transparent;
}

.colhead {
  box-sizing: border-box;
  text-align: center;
  line-height: 29px;
  color: #d4d4d4;
  border-right: 1px solid #3a3a3a;
  border-bottom: 1px solid #8a8a8a;
}

.colhead.sel,
.rowhead.sel {
  background: #6b6b6b;
  color: #fff;
}

.rowhead {
  box-sizing: border-box;
  text-align: center;
  line-height: 30px;
  color: #dedede;
  border-bottom: 1px solid #3a3a3a;
}

.cell {
  box-sizing: border-box;
  position: relative;
  background: #fff;
  border-right: 1px solid #d6d6d6;
  border-bottom: 1px solid #d6d6d6;
  color: #111;
  text-align: right;
  line-height: 30px;
  padding-right: 4px;
  white-space: nowrap;
  overflow: hidden;
}

.cell.text {
  text-align: left;
  padding: 0 0 0 3px;
  font-size: 21px;
}

.cell.current {
  overflow: visible;
  outline: 2px solid #1e6e47;
  outline-offset: -1px;
  z-index: 1;
}

.handle {
  position: absolute;
  right: -4px;
  bottom: -3px;
  width: 6px;
  height: 6px;
  background: #1e6e47;
  border: 1px solid #fff;
}

.vscroll {
  flex: 1;
  background: #0a0a0a;
  display: flex;
  flex-direction: column;
  align-items: center;
  padding-top: 8px;
  box-sizing: border-box;
}

.tri {
  width: 13px;
  height: 9px;
  fill: #9a9a9a;
}

.vthumb {
  width: 10px;
  height: 28px;
  margin-top: 9px;
  border-radius: 5px;
  background: #a6a6a6;
}

.tri.down {
  margin-top: auto;
  margin-bottom: 5px;
}

/* sheet tabs */
.sheetbar {
  height: 48px;
  flex: none;
  display: flex;
  align-items: center;
  background: #0a0a0a;
}

.nav-ic {
  width: 10px;
  height: 18px;
  margin-left: 34px;
  fill: none;
  stroke: #777;
  stroke-width: 1.400;
  flex: none;
}

.nav-ic.next {
  margin-left: 39px;
}

.sheet-tab {
  position: relative;
  width: 239px;
  height: 43px;
  margin-left: 73px;
  align-self: flex-start;
  flex: none;
  box-sizing: border-box;
  background: #fff;
  border-radius: 0 0 8px 8px;
  padding: 0 12px;
  font-size: 20px;
  font-weight: 500;
  color: #222;
  line-height: 39px;
  text-align: center;
  white-space: nowrap;
}

.sheet-tab::before,
.sheet-tab::after {
  content: "";
  position: absolute;
  top: 0;
  width: 7px;
  height: 7px;
}

.sheet-tab::before {
  left: -7px;
  background: radial-gradient(circle at 0 100%, #0a0a0a 6.500px, #fff 7px);
}

.sheet-tab::after {
  right: -7px;
  background: radial-gradient(circle at 100% 100%, #0a0a0a 6.500px, #fff 7px);
}

.sheet-tab span {
  display: block;
  height: 34px;
  border-bottom: 4px solid #1f7a4c;
}

.tab-sep {
  width: 1px;
  height: 36px;
  margin-left: 7px;
  margin-bottom: 10px;
  background: #555;
  flex: none;
}

.plus {
  width: 30px;
  margin-left: 54px;
  text-align: center;
  font-size: 28px;
  font-weight: 300;
  line-height: 1;
  color: #cfcfcf;
  flex: none;
}

.hdots {
  margin-left: 658px;
  display: flex;
  flex-direction: column;
  gap: 4px;
  flex: none;
}

.hdots i {
  width: 3px;
  height: 3px;
  background: #d8d8d8;
}

.hscroll {
  margin-left: 23px;
  width: 709px;
  height: 28px;
  flex: none;
  display: flex;
  align-items: center;
  background: #111;
  border-radius: 14px;
  padding: 0 6px 0 7px;
  box-sizing: border-box;
  color: #999;
}

.htri {
  width: 8px;
  height: 18px;
  fill: none;
  stroke: none;
  flex: none;
}

.hthumb {
  width: 463px;
  height: 12px;
  margin-left: 9px;
  border-radius: 6px;
  background: #9c9c9c;
}

.htri.right {
  margin-left: auto;
}

/* status bar */
.status {
  height: 31px;
  flex: none;
  box-sizing: border-box;
  display: flex;
  align-items: center;
  background: #1d1d1d;
  border-top: 1px solid #333;
  padding-left: 16px;
  font-size: 15px;
  color: #e8e8e8;
}

.ready {
  width: 72px;
  flex: none;
}

.person {
  width: 22px;
  height: 26px;
  color: #e0e0e0;
  stroke-width: 1.600;
}

.access {
  margin-left: 5px;
  width: 1357px;
  flex: none;
}

.view-btn {
  width: 60px;
  height: 30px;
  flex: none;
  display: flex;
  align-items: center;
  justify-content: center;
  color: #e2e2e2;
}

.view-btn.on {
  background: #2a2a2a;
}

.view-btn.dim {
  color: #5c5c5c;
}

.v-normal {
  width: 19px;
  height: 25px;
}

.v-page {
  width: 22px;
  height: 25px;
}

.v-break {
  width: 20px;
  height: 27px;
}

.zoom-sign {
  width: 14px;
  text-align: center;
  flex: none;
  font-size: 20px;
  color: #d8d8d8;
}

.zoom-sign.minus {
  margin-left: 7px;
}

.slider {
  position: relative;
  width: 148px;
  height: 3px;
  margin: 0 10px 0 9px;
  background: #b5b5b5;
  flex: none;
}

.slider i {
  position: absolute;
  left: 70px;
  top: -9px;
  width: 7px;
  height: 21px;
  background: #c4c4c4;
}

.zoom-val {
  margin-left: 15px;
  font-size: 15px;
}

/* overlays */
.tooltip {
  position: absolute;
  left: 1575px;
  top: 360px;
  width: 101px;
  height: 31px;
  box-sizing: border-box;
  background: #e8e8e8;
  border: 1px solid #b5b5b5;
  color: #3a3a3a;
  font-size: 16.500px;
  line-height: 29px;
  text-align: center;
  white-space: nowrap;
}

.activate {
  position: absolute;
  left: 1498px;
  top: 904px;
  color: rgba(190, 190, 190, 0.72);
  white-space: nowrap;
  pointer-events: none;
}

.act-1 {
  font-size: 28.800px;
  line-height: 40px;
}

.act-2 {
  margin-top: 1px;
  font-size: 20.900px;
  line-height: 28px;
}

.mark {
  position: absolute;
  left: 854px;
  top: 899px;
  width: 214px;
  color: #cfcfcf;
  text-align: center;
  pointer-events: none;
}

.mark-ar {
  font: 700 71px/84px "DejaVu Sans", sans-serif;
  -webkit-text-stroke: 3px #cfcfcf;
  white-space: nowrap;
}

.mark-en {
  margin-top: -9px;
  font: 500 38px/42px Lato, sans-serif;
}
</style>
